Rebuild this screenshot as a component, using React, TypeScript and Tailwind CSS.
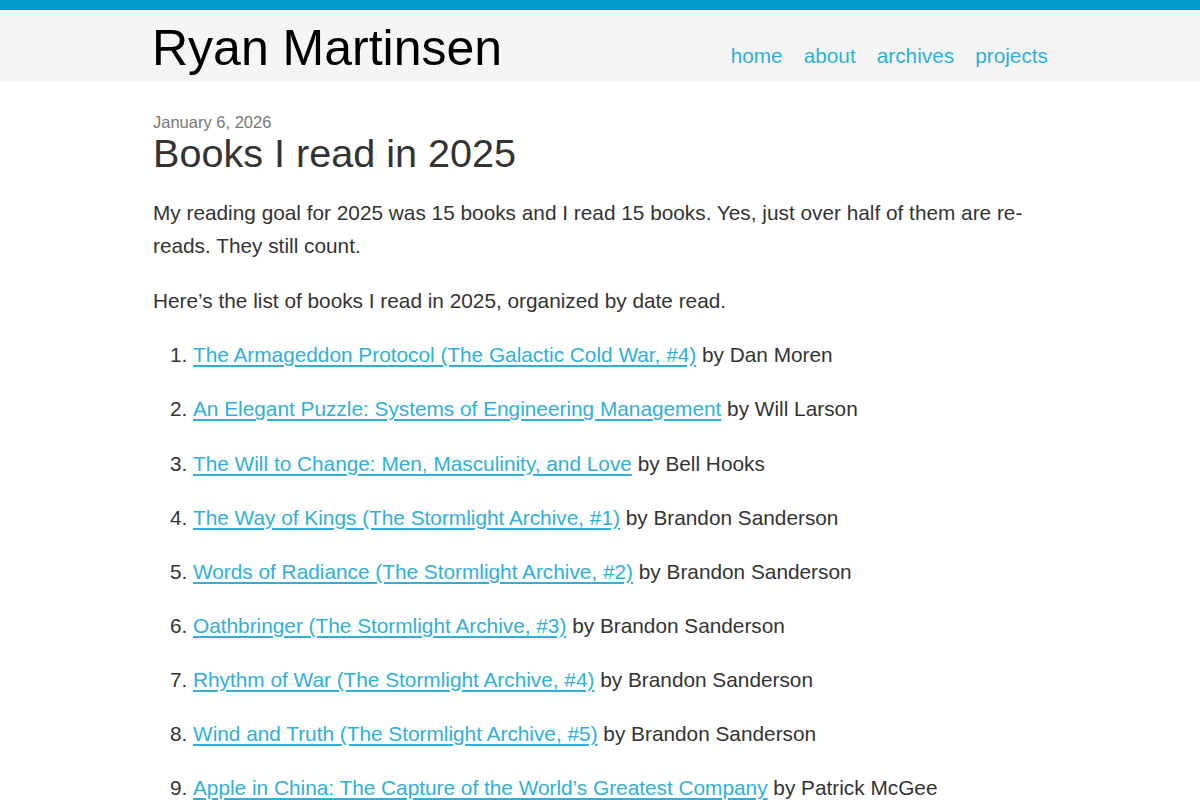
import React from "react";

const books: { title: string; author: string }[] = [
  { title: "The Armageddon Protocol (The Galactic Cold War, #4)", author: "Dan Moren" },
  { title: "An Elegant Puzzle: Systems of Engineering Management", author: "Will Larson" },
  { title: "The Will to Change: Men, Masculinity, and Love", author: "Bell Hooks" },
  { title: "The Way of Kings (The Stormlight Archive, #1)", author: "Brandon Sanderson" },
  { title: "Words of Radiance (The Stormlight Archive, #2)", author: "Brandon Sanderson" },
  { title: "Oathbringer (The Stormlight Archive, #3)", author: "Brandon Sanderson" },
  { title: "Rhythm of War (The Stormlight Archive, #4)", author: "Brandon Sanderson" },
  { title: "Wind and Truth (The Stormlight Archive, #5)", author: "Brandon Sanderson" },
  { title: "Apple in China: The Capture of the World\u2019s Greatest Company", author: "Patrick McGee" },
  { title: "Project Hail Mary", author: "Andy Weir" },
];

export default function App() {
  return (
    <div className="min-h-screen bg-white font-['Liberation_Sans',Arial,sans-serif] text-[#333]">
      <div className="h-[10px] bg-[#0099cc]" />
      <header className="bg-[#f5f5f5]">
        <div className="mx-auto flex h-[72px] w-[896px] items-end justify-between">
          <h1 className="pb-[9px] text-[50px] leading-none text-black">Ryan Martinsen</h1>
          <nav className="flex gap-[21px] pb-[15px] text-[20.8px] leading-none text-[#2fb0dc]">
            <a href="#">home</a>
            <a href="#">about</a>
            <a href="#">archives</a>
            <a href="#">projects</a>
          </nav>
        </div>
      </header>
      <main className="mx-auto w-[896px] pl-[1px] pt-[30px]">
        <div className="text-[16.5px] leading-[20px] text-[#777]">January 6, 2026</div>
        <h2 className="text-[39.6px] leading-[42px]">Books I read in 2025</h2>
        <p className="mt-[22px] text-[20.8px] leading-[1.6]">
          My reading goal for 2025 was 15 books and I read 15 books. Yes, just over half of them are re-reads. They still count.
        </p>
        <p className="mt-[21.8px] text-[20.8px] leading-[1.6]">
          Here’s the list of books I read in 2025, organized by date read.
        </p>
        <ol className="mt-[20.8px] list-decimal pl-[40px] text-[20.8px] leading-[1.6]">
          {books.map((b) => (
            <li key={b.title} className="mb-[20.8px]">
              <a href="#" className="text-[#2fb0dc] underline underline-offset-[3px]">
                {b.title}
              </a>{" "}
              by {b.author}
            </li>
          ))}
        </ol>
      </main>
    </div>
  );
}
